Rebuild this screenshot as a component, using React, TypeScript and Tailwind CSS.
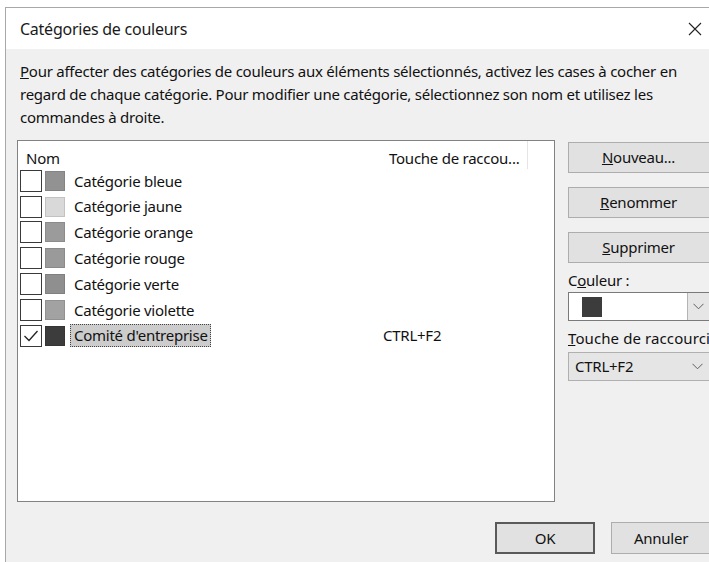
import React from "react"

type Category = {
  name: string
  color: string
  checked?: boolean
  shortcut?: string
}

const categories: Category[] = [
  { name: "Catégorie bleue", color: "#929292" },
  { name: "Catégorie jaune", color: "#d9d9d9" },
  { name: "Catégorie orange", color: "#9b9b9b" },
  { name: "Catégorie rouge", color: "#9a9a9a" },
  { name: "Catégorie verte", color: "#8f8f8f" },
  { name: "Catégorie violette", color: "#a2a2a2" },
  { name: "Comité d'entreprise", color: "#3c3c3c", checked: true, shortcut: "CTRL+F2" },
]

const font = "font-['Segoe_UI','Noto_Sans','Open_Sans',sans-serif] tracking-[-0.25px]"

function Chevron() {
  return (
    <svg width="11" height="7" viewBox="0 0 11 7" className="text-[#606060]">
      <path d="M0.5 0.8 L5.5 5.8 L10.5 0.8" fill="none" stroke="currentColor" strokeWidth="1" />
    </svg>
  )
}

function Check() {
  return (
    <svg width="16" height="14" viewBox="0 0 16 14">
      <path d="M1.5 7 L6 11.5 L14.5 2" fill="none" stroke="#222" strokeWidth="1.3" />
    </svg>
  )
}

function SideButton({ label, accel }: { label: string; accel: string }) {
  return (
    <button className="h-[31px] w-[146px] border border-[#adadad] bg-[#e1e1e1] text-[15px] text-[#111] pr-[5px]">
      <span className="underline">{accel}</span>
      {label}
    </button>
  )
}

export default function App() {
  return (
    <div className={`w-[709px] h-[562px] overflow-hidden bg-white ${font} text-[#111]`}>
      <div className="ml-[5px] mt-[7px] w-[720px] h-[600px] border-l border-t border-[#a8a8a8] flex flex-col">
        {/* title bar */}
        <div className="h-[41px] bg-white flex items-center justify-between pl-[14px] pr-[23px] shrink-0">
          <span className="text-[16px] text-[#1a1a1a]">Catégories de couleurs</span>
          <svg width="14" height="14" viewBox="0 0 14 14">
            <path d="M1 1 L13 13 M13 1 L1 13" stroke="#222" strokeWidth="1.1" />
          </svg>
        </div>

        <div className="flex-1 bg-[#f0f0f0] pl-[11px]">
          <p className="pt-[11px] pl-[3px] w-[685px] text-[15px] leading-[23px]">
            <span className="underline">P</span>our affecter des catégories de couleurs aux éléments sélectionnés, activez les cases à cocher en
            regard de chaque catégorie. Pour modifier une catégorie, sélectionnez son nom et utilisez les commandes à droite.
          </p>

          <div className="mt-[11px] flex gap-[13px]">
            {/* category list */}
            <div className="w-[538px] h-[362px] border border-[#828282] bg-white text-[15px]">
              <div className="h-[27px] relative">
                <span className="absolute left-[8px] top-[6px]">Nom</span>
                <span className="absolute left-[371px] top-[6px]">Touche de raccou...</span>
                <span className="absolute left-[509px] top-0 h-[28px] w-px bg-[#e5e5e5]" />
              </div>
              {categories.map((c) => (
                <div key={c.name} className="relative h-[25.8px] flex items-center pl-[2px]">
                  <div className="w-[22px] h-[22px] border-[1.5px] border-[#3a3a3a] bg-white flex items-center justify-center">
                    {c.checked && <Check />}
                  </div>
                  <div
                    className="ml-[3px] w-[20px] h-[20px] border border-black/10"
                    style={{ backgroundColor: c.color }}
                  />
                  {c.checked ? (
                    <span className="ml-[5px] h-[23px] pl-[3px] pr-[2px] leading-[20px] whitespace-nowrap bg-[#cccccc] border border-dotted border-[#444]">
                      {c.name}
                    </span>
                  ) : (
                    <span className="ml-[9px] whitespace-nowrap">{c.name}</span>
                  )}
                  {c.shortcut && <span className="absolute left-[365px]">{c.shortcut}</span>}
                </div>
              ))}
            </div>

            {/* right-hand commands */}
            <div className="flex flex-col pt-[2px] text-[15px]">
              <div className="flex flex-col gap-[14px]">
                <SideButton accel="N" label="ouveau..." />
                <SideButton accel="R" label="enommer" />
                <SideButton accel="S" label="upprimer" />
              </div>
              <div className="mt-[6px] leading-[22px]">
                C<span className="underline">o</span>uleur :
              </div>
              <div className="mt-[1px] h-[29px] w-[146px] border border-[#7a7a7a] bg-white flex">
                <div className="flex-1 flex items-center pl-[13px]">
                  <div className="w-[20px] h-[20px] bg-[#3c3c3c]" />
                </div>
                <div className="w-[26px] border-l border-[#b5b5b5] bg-[#e6e6e6] flex items-center justify-center pr-[4px]">
                  <Chevron />
                </div>
              </div>
              <div className="mt-[6px] leading-[22px] whitespace-nowrap tracking-[0.1px]">
                <span className="underline">T</span>ouche de raccourci :
              </div>
              <div className="mt-[3px] h-[29px] w-[146px] border border-[#b0b0b0] bg-[#e5e5e5] flex items-center justify-between pl-[6px] pr-[10px]">
                <span>CTRL+F2</span>
                <Chevron />
              </div>
            </div>
          </div>

          {/* dialog buttons */}
          <div className="mt-[20px] flex gap-[16px] pl-[478px] text-[15px]">
            <button className="w-[100px] h-[32px] border-2 border-[#5a5a5a] bg-[#e1e1e1]">OK</button>
            <button className="w-[100px] h-[32px] border border-[#adadad] bg-[#e1e1e1]">Annuler</button>
          </div>
        </div>
      </div>
    </div>
  )
}
